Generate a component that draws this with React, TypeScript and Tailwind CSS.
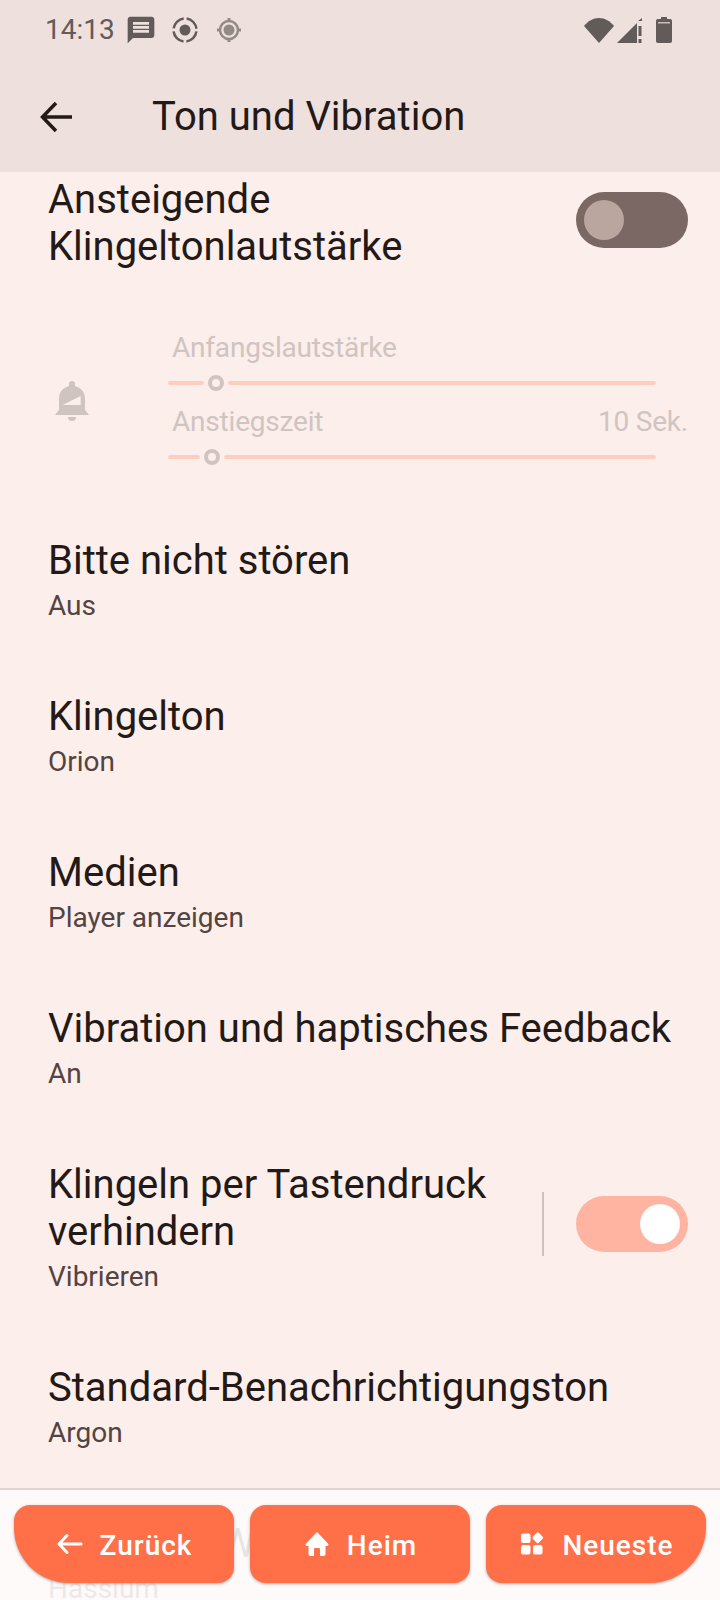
import React from 'react';

const Row = ({ title, sub }: { title: string; sub: string }) => (
  <div className="px-[48px] pt-[34px] pb-[34px]">
    <div className="text-[40px] leading-[47px] text-[#231917]">{title}</div>
    <div className="mt-[3px] text-[28px] leading-[38px] text-[#534341]">{sub}</div>
  </div>
);

const Slider = ({ label, value, pos }: { label: string; value?: string; pos: number }) => (
  <div>
    <div className="flex justify-between pt-[1px] text-[28px] leading-[35px] tracking-[-0.2px] text-[#d0c4c1]">
      <span className="pl-[4px]">{label}</span>
      {value && <span>{value}</span>}
    </div>
    <div className="mt-[8px] flex h-[20px] w-[488px] items-center">
      <div className="h-[4px] rounded-full bg-[#ffcdc0]" style={{ width: pos }} />
      <div className="mx-[4px] h-[16px] w-[16px] rounded-full border-[4px] border-[#d0c4c1]" />
      <div className="h-[4px] flex-1 rounded-full bg-[#ffcdc0]" />
    </div>
  </div>
);

const NavButton = ({ label, icon, corner }: { label: string; icon: React.ReactNode; corner: string }) => (
  <button className={`flex h-[78px] w-[220px] items-center justify-center gap-[16px] bg-[#ff7049] text-[28px] font-medium tracking-[1px] text-white shadow-[0_1px_3px_rgba(0,0,0,0.3)] ${corner}`}>
    {icon}
    <span className="pt-[3px]">{label}</span>
  </button>
);

export default function App() {
  return (
    <div className="relative h-[1600px] w-[720px] overflow-hidden bg-[#fceeeb] font-['Roboto',sans-serif]">
      <header className="h-[172px] bg-[#eee0dd]">
        <div className="flex h-[60px] items-center justify-between pl-[45px] pr-[48px] text-[#625b59]">
          <div className="flex items-center">
            <span className="text-[28px]">14:13</span>
            <svg className="ml-[10px]" width="32" height="32" viewBox="0 0 24 24" fill="currentColor">
              <path d="M20 2H4c-1.100 0-2 .900-2 2v18l4-4h14c1.100 0 2-.900 2-2V4c0-1.100-.900-2-2-2zm-2 12H6v-2h12v2zm0-3H6V9h12v2zm0-3H6V6h12v2z" />
            </svg>
            <svg className="ml-[12px]" width="32" height="32" viewBox="0 0 32 32" fill="none" stroke="currentColor" strokeWidth="2.500">
              <circle cx="16" cy="16" r="5.500" fill="currentColor" stroke="none" />
              <circle cx="16" cy="16" r="11.500" strokeDasharray="15 3" strokeDashoffset="-1.500" />
            </svg>
            <svg className="ml-[12px] text-[#938a87]" width="32" height="32" viewBox="0 0 32 32" fill="currentColor">
              <circle cx="16" cy="16" r="5.500" />
              <circle cx="16" cy="16" r="9" fill="none" stroke="currentColor" strokeWidth="2.500" />
              <path d="M14.500 4h3v4h-3zM14.500 24h3v4h-3zM4 14.500h4v3H4zM24 14.500h4v3h-4z" />
            </svg>
          </div>
          <div className="flex items-center">
            <svg width="30" height="26" viewBox="0 0 30 26" fill="currentColor">
              <path d="M0 9C4 4 9 1 15 1s11 3 15 8L15 26z" />
            </svg>
            <svg className="ml-[3px]" width="25" height="26" viewBox="0 0 25 26" fill="currentColor">
              <path d="M0 26L20 6v20z" />
              <path d="M21 4l4-3v3zM21.500 9h3v10h-3zM21.500 22h3v4h-3z" />
            </svg>
            <svg className="ml-[14px]" width="16" height="26" viewBox="0 0 16 26" fill="currentColor">
              <path d="M5 0h6v2h3a2 2 0 0 1 2 2v20a2 2 0 0 1-2 2H2a2 2 0 0 1-2-2V4a2 2 0 0 1 2-2h3z" />
              <rect x="2" y="5" width="12" height="1.500" fill="#c9bdba" />
            </svg>
          </div>
        </div>
        <div className="flex h-[112px] items-center pt-[2px] pl-[40px]">
          <svg width="32" height="32" viewBox="0 0 32 32" fill="none" stroke="#231917" strokeWidth="3.500">
            <path d="M33 16H3M16 2L2.500 16 16 30" />
          </svg>
          <h1 className="ml-[80px] text-[40px] font-normal text-[#231917]">Ton und Vibration</h1>
        </div>
      </header>

      <main>
        <div className="flex items-start justify-between pl-[48px] pr-[32px] pt-[4px]">
          <div className="text-[40px] leading-[47px] text-[#231917]">
            Ansteigende
            <br />
            Klingeltonlautstärke
          </div>
          <div className="mt-[16px] flex h-[56px] w-[112px] items-center rounded-full bg-[#7b6864] pl-[8px]">
            <div className="h-[40px] w-[40px] rounded-full bg-[#baa59f]" />
          </div>
        </div>

        <div className="mt-[59px] flex items-center pl-[55px] pr-[32px]">
          <svg className="mt-[6px] text-[#d0c4c1]" width="34" height="40" viewBox="0 0 34 40" fill="currentColor">
            <path d="M17 0a3 3 0 0 1 3 3v2c6 1.500 10 6 10 13v11l4 5H0l4-5V18c0-7 4-11.500 10-13V3a3 3 0 0 1 3-3z" />
            <path d="M13 36h8a4 4 0 0 1-8 0z" />
            <path d="M7.700 24L25.700 15v9z" fill="#fceeeb" />
          </svg>
          <div className="ml-[79px] flex-1">
            <Slider label="Anfangslautstärke" pos={36} />
            <div className="mt-[10px]">
              <Slider label="Anstiegszeit" value="10 Sek." pos={32} />
            </div>
          </div>
        </div>

        <div className="mt-[36px]">
          <Row title="Bitte nicht stören" sub="Aus" />
          <Row title="Klingelton" sub="Orion" />
          <Row title="Medien" sub="Player anzeigen" />
          <Row title="Vibration und haptisches Feedback" sub="An" />
          <div className="flex items-center pl-[48px] pr-[32px] pt-[34px] pb-[34px]">
            <div className="flex-1">
              <div className="text-[40px] leading-[47px] text-[#231917]">
                Klingeln per Tastendruck
                <br />
                verhindern
              </div>
              <div className="mt-[3px] text-[28px] leading-[38px] text-[#534341]">Vibrieren</div>
            </div>
            <div className="mr-[32px] mb-[10px] h-[64px] w-[2px] bg-[#cfc0bc]" />
            <div className="mb-[10px] flex h-[56px] w-[112px] items-center justify-end rounded-full bg-[#ffb4a2] pr-[8px]">
              <div className="h-[40px] w-[40px] rounded-full bg-white" />
            </div>
          </div>
          <Row title="Standard-Benachrichtigungston" sub="Argon" />
          <Row title="Standard-Weckton" sub="Hassium" />
        </div>
      </main>

      <nav className="absolute bottom-0 left-0 flex h-[112px] w-full gap-[16px] border-t-[2px] border-[#e0d3d0] bg-[#fefbfb]/90 pl-[14px] pt-[15px]">
        <NavButton
          label="Zurück"
          corner="rounded-tl-[16px] rounded-tr-[16px] rounded-br-[16px] rounded-bl-[55px]"
          icon={
            <svg width="28" height="28" viewBox="0 0 28 28" fill="none" stroke="white" strokeWidth="3" strokeLinecap="round" strokeLinejoin="round">
              <path d="M25 14H3M11 5.500L3 14l8 8.500" />
            </svg>
          }
        />
        <NavButton
          label="Heim"
          corner="rounded-[16px]"
          icon={
            <svg width="28" height="28" viewBox="0 0 28 28" fill="white">
              <path d="M14 2L3 13.500c-1 1-.4 2.500 1 2.500h1.500v8c0 1.100.900 2 2 2H11v-7a1 1 0 0 1 1-1h4a1 1 0 0 1 1 1v7h3.500c1.100 0 2-.900 2-2v-8H24c1.400 0 2-1.500 1-2.500z" />
            </svg>
          }
        />
        <NavButton
          label="Neueste"
          corner="rounded-tl-[16px] rounded-tr-[16px] rounded-bl-[16px] rounded-br-[56px]"
          icon={
            <svg width="28" height="28" viewBox="0 0 28 28" fill="white">
              <rect x="3" y="3.500" width="9.500" height="9.500" rx="2" />
              <rect x="3" y="15" width="9.500" height="9.500" rx="2" />
              <rect x="15" y="15" width="9.500" height="9.500" rx="2" />
              <rect x="15.500" y="3.500" width="8.500" height="8.500" rx="1.500" transform="rotate(45 19.750 7.750)" />
            </svg>
          }
        />
      </nav>
    </div>
  );
}
